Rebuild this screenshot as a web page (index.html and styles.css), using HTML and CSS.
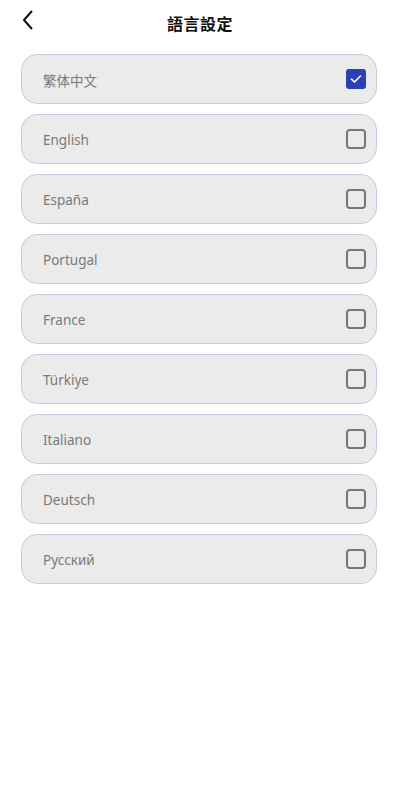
FILE: index.html
```html
<!DOCTYPE html>
<html lang="zh-Hant">
<head>
<meta charset="utf-8">
<title>語言設定</title>
<link rel="stylesheet" href="styles.css">
</head>
<body>
<div class="page">
  <header class="header">
    <button class="back" aria-label="back">
      <svg width="12" height="20" viewBox="0 0 12 20"><path d="M9.5 1.5 L2 10 L9.5 18.5" fill="none" stroke="#111" stroke-width="2" stroke-linecap="round" stroke-linejoin="round"/></svg>
    </button>
    <h1 class="title">語言設定</h1>
  </header>
  <ul class="list">
    <li class="item"><span class="label">繁体中文</span><span class="check checked"><svg width="12" height="10" viewBox="0 0 12 10"><path d="M1.5 5.2 L4.5 8 L10.5 2" fill="none" stroke="#fff" stroke-width="1.6" stroke-linecap="round" stroke-linejoin="round"/></svg></span></li>
    <li class="item"><span class="label">English</span><span class="check"></span></li>
    <li class="item"><span class="label">España</span><span class="check"></span></li>
    <li class="item"><span class="label">Portugal</span><span class="check"></span></li>
    <li class="item"><span class="label">France</span><span class="check"></span></li>
    <li class="item"><span class="label">Türkiye</span><span class="check"></span></li>
    <li class="item"><span class="label">Italiano</span><span class="check"></span></li>
    <li class="item"><span class="label">Deutsch</span><span class="check"></span></li>
    <li class="item"><span class="label">Русский</span><span class="check"></span></li>
  </ul>
</div>
</body>
</html>
```
FILE: styles.css
```css
html, body {
  margin: 0;
  padding: 0;
  background: #fff;
}
body {
  font-family: "Noto Sans", "Noto Sans CJK TC", sans-serif;
}
.page {
  width: 400px;
}
.header {
  position: relative;
  height: 48px;
  display: flex;
  align-items: center;
  justify-content: center;
}
.back {
  position: absolute;
  left: 22px;
  top: 10px;
  padding: 0;
  border: 0;
  background: none;
  width: 12px;
  height: 20px;
}
.back svg { display: block; }
.title {
  margin: -2px 0 0;
  font-family: "Noto Sans CJK TC", sans-serif;
  font-size: 16px;
  font-weight: 700;
  color: #111;
  letter-spacing: 0.5px;
}
.list {
  list-style: none;
  margin: 6px 0 0;
  padding: 0 23px 0 21px;
  display: flex;
  flex-direction: column;
  gap: 10px;
}
.item {
  box-sizing: border-box;
  height: 50px;
  border: 1px solid #c9cbe3;
  border-radius: 16px;
  background: #ebebeb;
  display: flex;
  align-items: center;
  justify-content: space-between;
  padding: 0 10px 0 21px;
}
.label {
  font-size: 13.5px;
  color: #7a7a7a;
  padding-top: 2px;
}
.check {
  box-sizing: border-box;
  width: 20px;
  height: 20px;
  border: 2px solid #777;
  border-radius: 4px;
  display: flex;
  align-items: center;
  justify-content: center;
}
.check.checked {
  border: 0;
  background: #2b3fb6;
  border-radius: 3px;
}
.check svg { display: block; }
```
